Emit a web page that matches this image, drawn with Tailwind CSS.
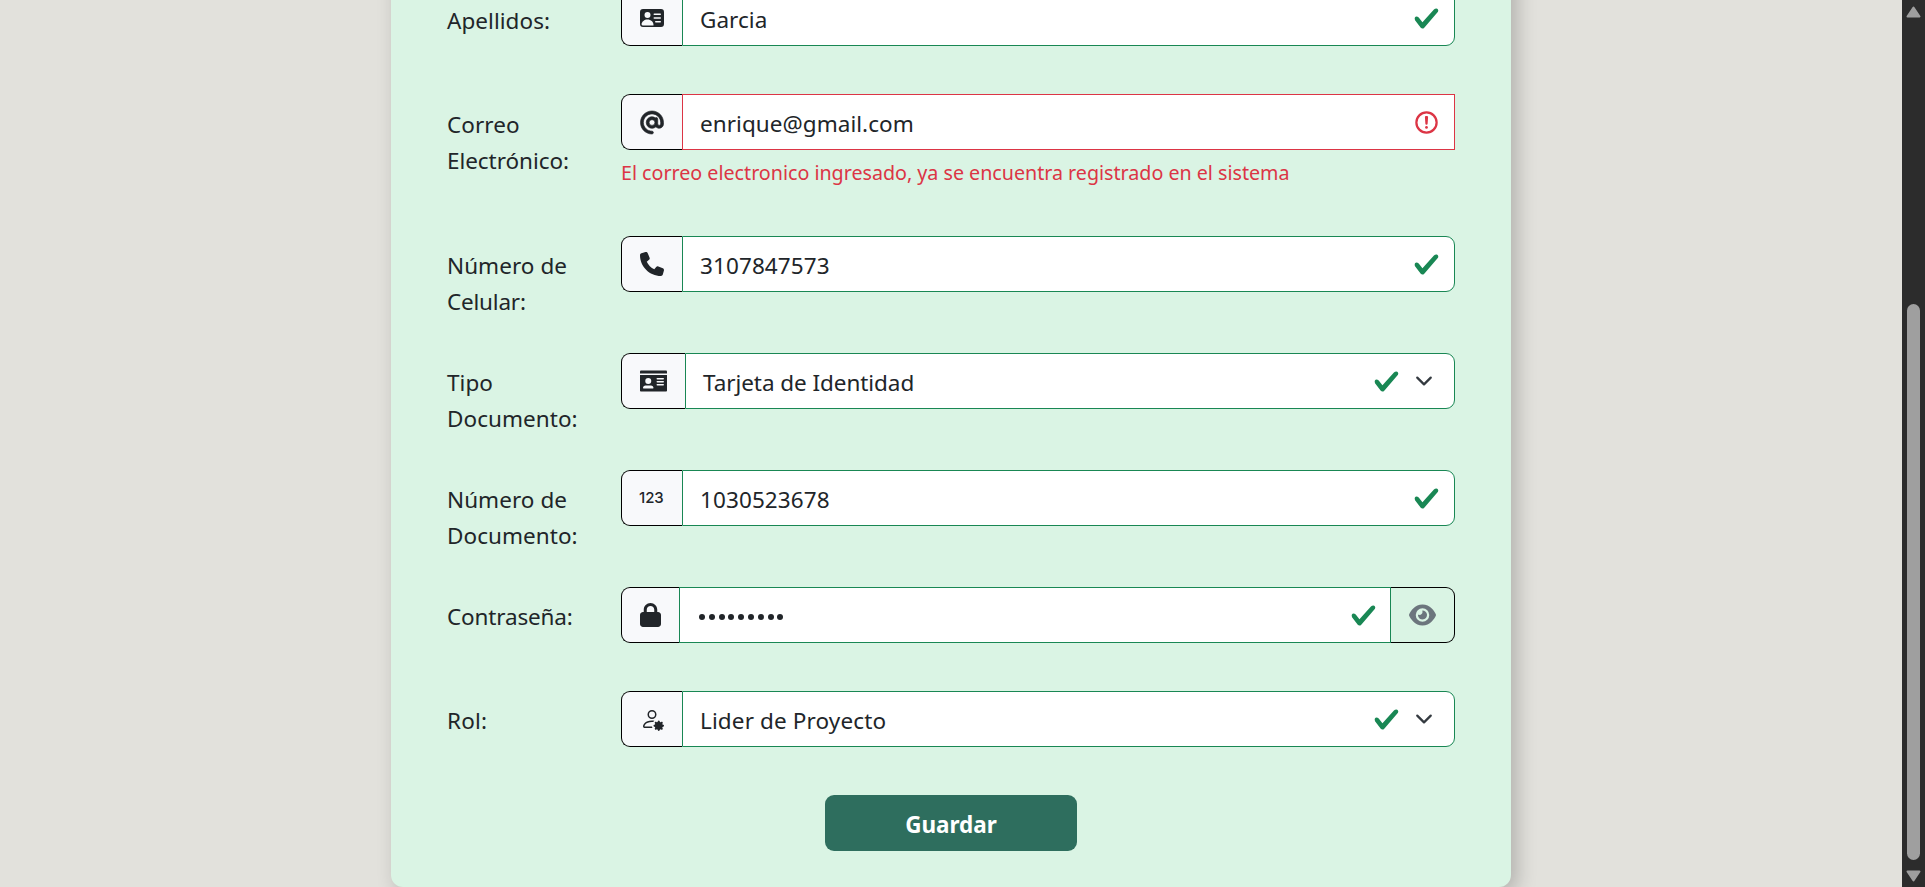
<!DOCTYPE html>
<html lang="es">
<head>
<meta charset="utf-8">
<title>Registro de usuario</title>
<script src="https://cdn.jsdelivr.net/npm/@tailwindcss/browser@4"></script>
</head>
<body class="flex h-[887px] overflow-hidden bg-[#e2e1dc] font-['Noto_Sans',sans-serif] text-[22.5px] leading-[36px] tracking-[0.05px] text-[#212529]">

<svg class="hidden">
  <symbol id="check" viewBox="0 0 8 8"><path fill="#198754" d="M2.3 6.73.6 4.53c-.4-1.04.46-1.4 1.1-.8l1.1 1.4 3.4-3.8c.6-.63 1.6-.27 1.2.7l-4 4.6c-.43.5-.8.4-1.1.1z"/></symbol>
  <symbol id="chevron" viewBox="0 0 16 16"><path fill="none" stroke="#343a40" stroke-linecap="round" stroke-linejoin="round" stroke-width="2" d="m2 5 6 6 6-6"/></symbol>
</svg>

<main class="flex h-full flex-1 justify-center">
  <form class="-mt-[34px] h-[921px] w-[1120px] shrink-0 rounded-xl bg-[#daf4e4] px-14 pt-6 shadow-[6px_6px_20px_rgba(0,0,0,0.22)]">

    <div class="flex h-[104px]">
      <label class="w-[174px] pt-[13px]">Apellidos:</label>
      <div class="flex h-14 w-[834px]">
        <span class="flex w-[61px] items-center rounded-l-[9px] border border-r-0 border-black bg-[#f8f9fb] pl-[18px]">
          <svg class="size-6" viewBox="0 0 16 16" fill="currentColor"><path d="M0 4a2 2 0 0 1 2-2h12a2 2 0 0 1 2 2v8a2 2 0 0 1-2 2H2a2 2 0 0 1-2-2V4zm9 1.5a.5.5 0 0 0 .5.5h4a.5.5 0 0 0 0-1h-4a.5.5 0 0 0-.5.5zM9 8a.5.5 0 0 0 .5.5h4a.5.5 0 0 0 0-1h-4A.5.5 0 0 0 9 8zm1 2.5a.5.5 0 0 0 .5.5h3a.5.5 0 0 0 0-1h-3a.5.5 0 0 0-.5.5zm-1 2C9 10.567 7.21 9 5 9c-2.086 0-3.8 1.398-3.984 3.181A1 1 0 0 0 2 13h6.96c.026-.163.04-.33.04-.5zM7 6a2 2 0 1 0-4 0 2 2 0 0 0 4 0z"/></svg>
        </span>
        <div class="flex flex-1 items-center justify-between rounded-r-[9px] border border-[#198754] bg-white pr-[14px] pl-[17px]">
          <span class="pt-[4px]">Garcia</span>
          <svg class="size-[27px]"><use href="#check"/></svg>
        </div>
      </div>
    </div>

    <div class="flex h-[142px]">
      <label class="w-[174px] pt-[13px]"><span>Correo</span><br><span class="tracking-[-0.05px]">Electrónico:</span></label>
      <div class="w-[834px]">
        <div class="flex h-14">
          <span class="flex w-[61px] items-center rounded-l-[9px] border border-r-0 border-black bg-[#f8f9fb] pl-[18px]">
            <svg class="h-[23px] w-6 overflow-visible" viewBox="0 0 512 512" fill="currentColor" stroke="currentColor" stroke-width="14"><path d="M256 64C150 64 64 150 64 256s86 192 192 192c17.700 0 32 14.300 32 32s-14.300 32-32 32C114.600 512 0 397.400 0 256S114.600 0 256 0S512 114.600 512 256l0 32c0 53-43 96-96 96c-29.300 0-55.600-13.200-73.200-33.900C320 371.100 289.500 384 256 384c-70.700 0-128-57.300-128-128s57.300-128 128-128c27.900 0 53.700 8.900 74.700 24.100c5.700-5 13.100-8.100 21.300-8.100c17.700 0 32 14.300 32 32l0 80 0 32c0 17.700 14.300 32 32 32s32-14.300 32-32l0-32c0-106-86-192-192-192zm64 192a64 64 0 1 0 -128 0 64 64 0 1 0 128 0z"/></svg>
          </span>
          <div class="flex flex-1 items-center justify-between border border-[#dc3545] bg-white pr-[14px] pl-[17px]">
            <span class="pt-[4px]">enrique@gmail.com</span>
            <svg class="size-[27px]" viewBox="0 0 12 12" fill="none" stroke="#dc3545"><circle cx="6" cy="6" r="4.5"/><path stroke-linejoin="round" d="M5.800 3.600h.4L6 6.500z"/><circle cx="6" cy="8.200" r=".6" fill="#dc3545" stroke="none"/></svg>
          </div>
        </div>
        <p class="mt-[7px] text-[19.7px] leading-[32px] tracking-[-0.015px] text-[#dc3545]">El correo electronico ingresado, ya se encuentra registrado en el sistema</p>
      </div>
    </div>

    <div class="flex h-[117px]">
      <label class="w-[174px] pt-[12px]"><span>Número de</span><br><span class="tracking-[-0.2px]">Celular:</span></label>
      <div class="flex h-14 w-[834px]">
        <span class="flex w-[61px] items-center rounded-l-[9px] border border-r-0 border-black bg-[#f8f9fb] pl-[18px]">
          <svg class="size-6" viewBox="0 0 512 512" fill="currentColor"><path d="M164.900 24.600c-7.700-18.600-28-28.500-47.400-23.200l-88 24C12.100 30.200 0 46 0 64C0 311.400 200.600 512 448 512c18 0 33.800-12.100 38.600-29.500l24-88c5.300-19.400-4.600-39.700-23.200-47.400l-96-40c-16.300-6.800-35.200-2.100-46.300 11.600L304.700 368C234.300 334.700 177.300 277.700 144 207.300L193.300 167c13.700-11.200 18.400-30 11.600-46.300l-40-96z"/></svg>
        </span>
        <div class="flex flex-1 items-center justify-between rounded-r-[9px] border border-[#198754] bg-white pr-[14px] pl-[17px]">
          <span class="pt-[3px] tracking-[0.1px]">3107847573</span>
          <svg class="size-[27px]"><use href="#check"/></svg>
        </div>
      </div>
    </div>

    <div class="flex h-[117px]">
      <label class="w-[174px] pt-[12px]"><span>Tipo</span><br><span>Documento:</span></label>
      <div class="flex h-14 w-[834px]">
        <span class="flex w-16 items-center rounded-l-[9px] border border-r-0 border-black bg-[#f8f9fb] pl-[18px]">
          <svg class="h-6 w-[27px]" viewBox="0 0 576 512" fill="currentColor"><path d="M552 32L24 32C11 32 0 43 0 56l0 40 576 0 0-40c0-13-11-24-24-24zM0 128L0 456c0 13 11 24 24 24l528 0c13 0 24-11 24-24l0-328L0 128zM64 405.300c0-29.500 23.900-53.300 53.300-53.300l117.300 0c29.500 0 53.300 23.900 53.300 53.300c0 5.900-4.800 10.700-10.700 10.700L74.700 416c-5.900 0-10.700-4.800-10.700-10.700zM176 192a64 64 0 1 1 0 128 64 64 0 1 1 0-128zm176 16c0-8.800 7.200-16 16-16l128 0c8.800 0 16 7.200 16 16s-7.200 16-16 16l-128 0c-8.800 0-16-7.200-16-16zm0 64c0-8.800 7.200-16 16-16l128 0c8.800 0 16 7.200 16 16s-7.200 16-16 16l-128 0c-8.800 0-16-7.200-16-16zm0 64c0-8.800 7.200-16 16-16l128 0c8.800 0 16 7.200 16 16s-7.200 16-16 16l-128 0c-8.800 0-16-7.200-16-16z"/></svg>
        </span>
        <div class="flex flex-1 items-center rounded-r-[9px] border border-[#198754] bg-white pr-[21px] pl-[17px]">
          <span class="flex-1 pt-[3px] tracking-[-0.06px]">Tarjeta de Identidad</span>
          <svg class="mr-[15px] size-[27px]"><use href="#check"/></svg>
          <svg class="size-[18px]"><use href="#chevron"/></svg>
        </div>
      </div>
    </div>

    <div class="flex h-[117px]">
      <label class="w-[174px] pt-[12px]"><span>Número de</span><br><span>Documento:</span></label>
      <div class="flex h-14 w-[834px]">
        <span class="flex w-[61px] items-center rounded-l-[9px] border border-r-0 border-black bg-[#f8f9fb] pl-[17px] font-['Inter','Roboto',sans-serif] text-[15px] font-medium tracking-[-0.1px]">123</span>
        <div class="flex flex-1 items-center justify-between rounded-r-[9px] border border-[#198754] bg-white pr-[14px] pl-[17px]">
          <span class="pt-[3px] tracking-[0.1px]">1030523678</span>
          <svg class="size-[27px]"><use href="#check"/></svg>
        </div>
      </div>
    </div>

    <div class="flex h-[104px]">
      <label class="w-[174px] pt-[12px] tracking-[-0.15px]">Contraseña:</label>
      <div class="flex h-14 w-[834px]">
        <span class="flex w-[58px] items-center rounded-l-[9px] border border-r-0 border-black bg-[#f8f9fb] pl-[18px]">
          <svg class="h-6 w-[21px]" viewBox="0 0 448 512" fill="currentColor"><path d="M144 144l0 48 160 0 0-48c0-44.200-35.800-80-80-80s-80 35.800-80 80zM80 192l0-48C80 64.500 144.500 0 224 0s144 64.500 144 144l0 48 16 0c35.300 0 64 28.700 64 64l0 192c0 35.300-28.700 64-64 64L64 512c-35.300 0-64-28.700-64-64L0 256c0-35.300 28.700-64 64-64l16 0z"/></svg>
        </span>
        <div class="flex flex-1 items-center justify-between border border-[#198754] bg-white pr-[13px] pl-[19px]">
          <span class="flex gap-[3.8px] pt-[4px]">
            <i class="size-[6px] rounded-full bg-[#212529]"></i><i class="size-[6px] rounded-full bg-[#212529]"></i><i class="size-[6px] rounded-full bg-[#212529]"></i><i class="size-[6px] rounded-full bg-[#212529]"></i><i class="size-[6px] rounded-full bg-[#212529]"></i><i class="size-[6px] rounded-full bg-[#212529]"></i><i class="size-[6px] rounded-full bg-[#212529]"></i><i class="size-[6px] rounded-full bg-[#212529]"></i><i class="size-[6px] rounded-full bg-[#212529]"></i>
          </span>
          <svg class="size-[27px]"><use href="#check"/></svg>
        </div>
        <button type="button" class="flex w-16 items-center rounded-r-[9px] border border-l-0 border-black pl-[18px] text-[#6c757d]">
          <svg class="h-6 w-[27px]" viewBox="0 0 576 512" fill="currentColor"><path d="M288 32c-80.800 0-145.500 36.800-192.600 80.600C48.600 156 17.300 208 2.500 243.700c-3.300 7.900-3.300 16.700 0 24.600C17.300 304 48.600 356 95.400 399.400C142.500 443.200 207.200 480 288 480s145.500-36.800 192.600-80.600c46.800-43.500 78.100-95.400 93-131.100c3.300-7.900 3.300-16.700 0-24.600c-14.900-35.700-46.200-87.700-93-131.100C433.500 68.800 368.800 32 288 32zM144 256a144 144 0 1 1 288 0 144 144 0 1 1 -288 0zm144-64c0 35.300-28.700 64-64 64c-7.100 0-13.900-1.200-20.300-3.300c-5.500-1.800-11.900 1.600-11.700 7.400c.3 6.900 1.300 13.800 3.200 20.700c13.700 51.200 66.400 81.600 117.600 67.900s81.600-66.400 67.900-117.600c-11.100-41.500-47.800-69.400-88.600-71.100c-5.800-.2-9.200 6.100-7.400 11.700c2.100 6.400 3.300 13.200 3.300 20.300z"/></svg>
        </button>
      </div>
    </div>

    <div class="flex h-[104px]">
      <label class="w-[174px] pt-[12px] tracking-[0.2px]">Rol:</label>
      <div class="flex h-14 w-[834px]">
        <span class="flex w-[61px] items-center rounded-l-[9px] border border-r-0 border-black bg-[#f8f9fb] pl-[18px]">
          <svg class="size-6" viewBox="0 0 16 16" fill="currentColor"><path d="M11 5a3 3 0 1 1-6 0 3 3 0 0 1 6 0ZM8 7a2 2 0 1 0 0-4 2 2 0 0 0 0 4Zm.256 7a4.474 4.474 0 0 1-.229-1.004H3c.001-.246.154-.986.832-1.664C4.484 10.680 5.711 10 8 10c.26 0 .507.009.74.025.226-.341.496-.65.804-.918C9.077 9.038 8.564 9 8 9c-5 0-6 3-6 4s1 1 1 1h5.256Z"/><path d="M11.886 9.460c.18-.613 1.048-.613 1.229 0l.043.148a.64.64 0 0 0 .921.382l.136-.074c.561-.306 1.175.308.87.869l-.075.136a.64.64 0 0 0 .382.92l.149.045c.612.18.612 1.048 0 1.229l-.15.043a.64.64 0 0 0-.38.921l.074.136c.305.561-.309 1.175-.87.87l-.136-.075a.64.64 0 0 0-.92.382l-.045.149c-.18.612-1.048.612-1.229 0l-.043-.15a.64.64 0 0 0-.921-.38l-.136.074c-.561.305-1.175-.309-.87-.87l.075-.136a.64.64 0 0 0-.382-.92l-.148-.045c-.613-.18-.613-1.048 0-1.229l.148-.043a.64.64 0 0 0 .382-.921l-.074-.136c-.306-.561.308-1.175.869-.87l.136.075a.64.64 0 0 0 .92-.382l.045-.148Z"/></svg>
        </span>
        <div class="flex flex-1 items-center rounded-r-[9px] border border-[#198754] bg-white pr-[21px] pl-[17px]">
          <span class="flex-1 pt-[3px] tracking-[0.13px]">Lider de Proyecto</span>
          <svg class="mr-[15px] size-[27px]"><use href="#check"/></svg>
          <svg class="size-[18px]"><use href="#chevron"/></svg>
        </div>
      </div>
    </div>

    <button class="mx-auto block h-14 w-[252px] rounded-[9px] bg-[#2e6e5e] pt-[3px] font-bold tracking-[-0.05px] text-white">Guardar</button>
  </form>
</main>

<aside class="flex w-[23px] flex-col bg-[#2c2c2c] pt-[6px] pl-1">
  <svg class="h-3 w-[15px]" viewBox="0 0 15 12"><path fill="#9f9f9f" stroke="#9f9f9f" stroke-width="2" stroke-linejoin="round" d="M7.500 1.500 13.500 10.500h-12z"/></svg>
  <div class="mt-[286px] ml-px h-[556px] w-[13px] rounded-full bg-[#9f9f9f]"></div>
  <svg class="mt-[10px] h-3 w-[15px]" viewBox="0 0 15 12"><path fill="#9f9f9f" stroke="#9f9f9f" stroke-width="2" stroke-linejoin="round" d="M7.500 10.500 13.500 1.500h-12z"/></svg>
</aside>
</body>
</html>
